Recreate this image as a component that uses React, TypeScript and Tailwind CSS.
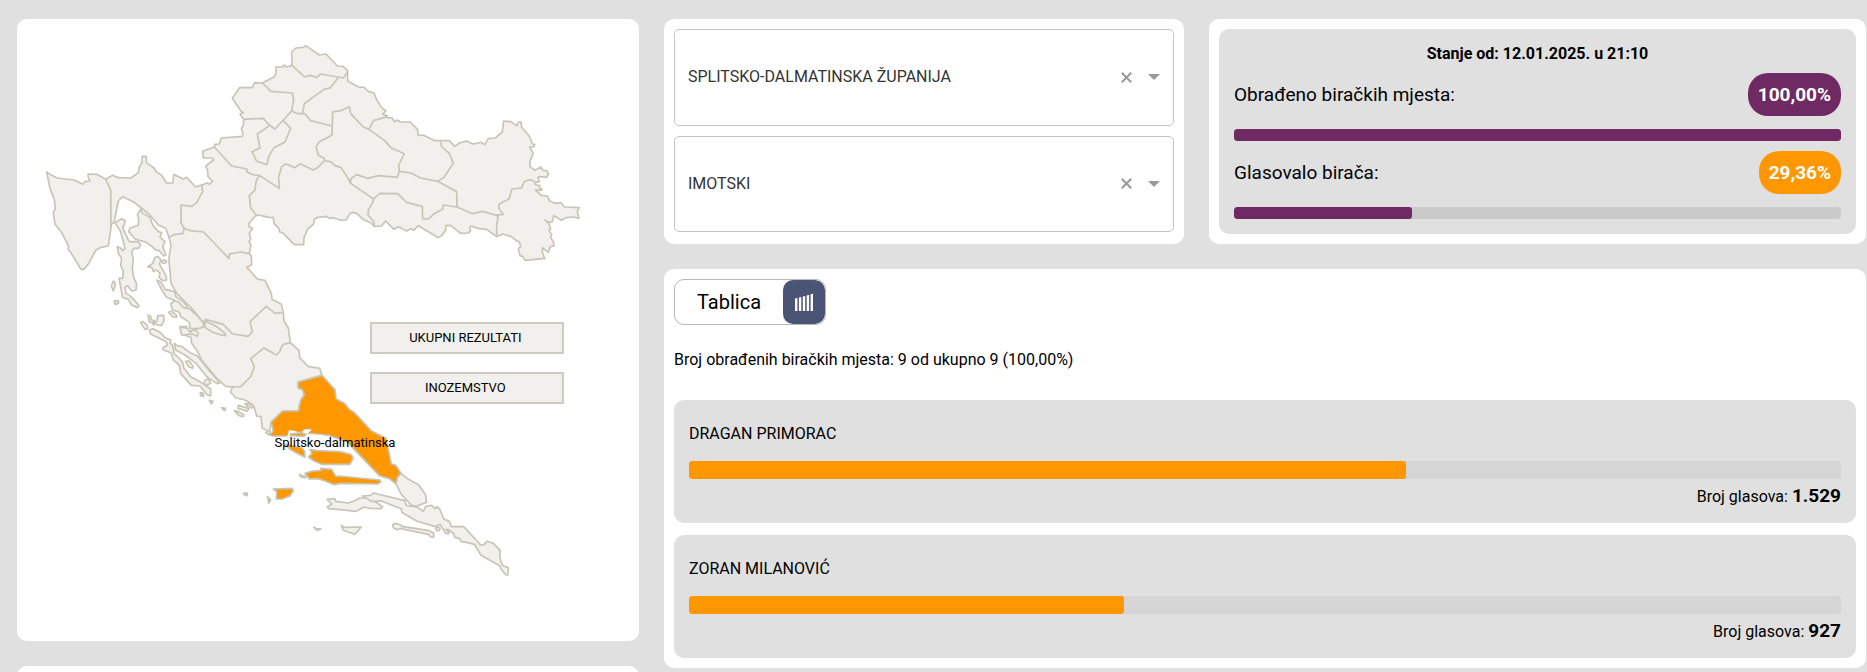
import { useState } from "react";
import type { ReactNode } from "react";
import clsx from "clsx";

interface Candidate {
  name: string;
  votes: string;
  share: number;
}

const candidates: Candidate[] = [
  { name: "DRAGAN PRIMORAC", votes: "1.529", share: 62.25 },
  { name: "ZORAN MILANOVIĆ", votes: "927", share: 37.75 },
];

/* ---------- Map geometry ---------- */

const MAINLAND =
  "140,516 152,524 172,534 222,540 249,553 254,545 270,543 265,532 264,522 290,523 317,538 338,526 355,533 392,534 410,522 416,515 417,503 426,488 427,469 439,469 439,488 462,504 468,515 484,525 500,549 519,549 521,523 550,537 560,532 587,561 605,555 622,549 628,553 638,543 624,530 623,511 617,498 641,480 637,474 610,474 608,454 643,441 644,433 658,432 664,414 727,409 729,401 724,385 730,377 731,358 720,343 730,338 723,334 697,295 719,263 757,263 764,248 787,249 823,230 828,220 828,201 848,201 852,195 862,201 876,196 875,156 888,144 910,142 917,137 958,165 978,162 1012,198 1029,199 1043,211 1043,243 1077,262 1091,261 1106,275 1122,279 1129,297 1145,323 1158,333 1148,342 1162,348 1163,353 1177,354 1183,366 1191,360 1201,366 1231,366 1253,389 1254,405 1271,406 1305,422 1348,422 1364,439 1378,429 1400,423 1418,432 1444,427 1454,434 1465,416 1486,414 1507,396 1511,363 1532,365 1551,377 1556,366 1563,366 1565,382 1589,410 1597,432 1604,433 1603,440 1589,441 1600,460 1590,483 1590,500 1605,511 1616,505 1623,501 1629,511 1640,512 1646,521 1640,532 1620,530 1614,532 1618,545 1604,548 1608,555 1619,556 1618,563 1625,567 1625,571 1606,570 1614,577 1623,586 1642,588 1649,603 1665,610 1683,608 1694,621 1738,623 1732,635 1737,655 1720,651 1698,653 1685,661 1661,647 1657,665 1645,667 1635,660 1647,671 1652,688 1647,691 1655,704 1652,712 1660,725 1662,738 1651,740 1645,757 1628,743 1627,755 1632,771 1635,775 1575,781 1568,769 1560,767 1555,745 1562,740 1559,727 1548,721 1534,710 1509,702 1490,710 1460,688 1438,686 1412,678 1409,683 1412,693 1405,699 1382,700 1352,676 1337,677 1337,691 1326,706 1315,713 1255,677 1241,691 1233,686 1220,693 1196,680 1182,688 1157,663 1144,678 1122,679 1113,668 1090,659 1070,640 1058,637 1050,641 1038,660 1023,661 1000,653 988,655 978,649 950,653 943,659 941,672 922,688 918,700 912,712 911,734 883,734 850,700 839,696 837,686 822,670 820,653 807,652 776,645 765,649 748,669 746,680 758,684 748,700 752,718 747,725 753,735 748,761 754,768 755,794 741,802 772,837 795,841 814,880 816,898 844,913 850,938 852,963 865,984 871,1028 897,1051 899,1073 924,1099 959,1105 966,1126 894,1146 894,1163 907,1169 913,1184 902,1201 895,1233 848,1233 813,1267 808,1305 797,1298 805,1292 787,1285 783,1250 770,1248 763,1223 755,1212 735,1200 708,1194 691,1176 698,1161 677,1159 650,1135 605,1080 590,1050 575,1030 573,1012 545,1003 540,980 560,980 565,994 580,992 595,985 612,972 580,930 530,880 513,850 507,780 507,772 513,735 507,712 497,685 475,675 450,645 400,605 368,590 355,603 342,668 333,672 333,682 325,738 303,742 288,750 265,792 252,808 243,808 214,760 204,748 206,738 183,695 165,672 160,638 166,625 163,598 150,565";

const BORDERS = [
  "317,538 332,570 333,682",
  "605,555 608,575 590,608 575,619 543,615 543,669 552,684 550,700 522,704 507,712",
  "552,684 570,692 611,696 687,776 688,762 722,756 748,761",
  "643,441 695,498 740,507 742,517 762,525 778,526 768,545 765,570 748,587 752,625 770,646",
  "778,526 838,565 836,530 845,500 858,492 885,503 900,491 939,510 950,505 973,483",
  "731,358 790,355 808,375 825,387 875,333 881,300 877,279 813,274 787,249",
  "850,362 872,385 855,426 822,443 806,470 801,494 770,484 756,455 780,444 772,402 808,377",
  "876,196 914,231 930,226 950,232 962,222 1030,234 1043,215",
  "1015,233 990,264 972,268 913,311 907,341",
  "875,333 893,341 915,341 932,362 995,378",
  "973,475 955,466 948,440 957,426 996,405 998,336 1022,332 1048,320 1052,341 1090,381 1107,388 1153,421 1173,443 1213,461 1196,495 1198,514 1192,532 1136,527 1103,535 1070,524 1052,537 1052,550 1035,520 1022,502 1005,497 992,485 973,483 973,475",
  "1107,388 1120,362 1162,350",
  "1198,514 1233,519 1262,534 1313,544 1332,532 1360,490 1348,460 1325,440 1321,424",
  "1313,544 1370,575 1371,621",
  "1052,550 1121,597 1140,580 1193,581 1220,607 1267,619 1268,656 1286,657 1300,643 1328,627 1330,615 1371,621 1418,641 1447,634 1496,648",
  "1121,597 1118,608 1105,630 1104,645 1122,665 1122,679",
  "1490,710 1490,675 1494,652 1490,645 1510,643 1496,625 1498,612 1527,597 1536,567 1565,564 1572,545 1588,539 1604,544",
  "612,972 616,958 670,973 698,1002 745,1009 757,995 750,965 799,919 825,940 847,938",
  "696,1161 722,1160 752,1130 763,1100 752,1076 792,1044 829,1065 839,1055 848,1034 871,1028",
];

// Kvarner and the northern Dalmatian islands
const NORTH_ISLANDS = [
  "152,27 158,40 180,52 188,75 205,95 215,98 210,112 225,125 218,140 228,165 222,168 207,152 197,150 180,135 165,125 150,122 135,117 116,95 120,84 145,76 146,55 142,45",
  "75,68 95,56 105,62 103,75 98,82 107,103 118,125 142,125 152,133 146,145 132,145 125,155 130,180 127,205 130,230 140,252 138,270 126,273 112,257 105,262 108,280 123,290 137,305 147,318 142,323 125,315 115,298 97,292 93,265 87,235 98,235 100,215 92,195 95,175 85,160 82,140 90,143 98,152 105,145 100,125 92,95",
  "70,243 76,250 74,262 70,273 64,258",
  "72,303 85,302 86,309 76,314",
  "205,170 213,180 208,192 227,225 230,240 218,242 207,232 210,220 200,210 190,214 185,202 173,200 188,190 195,172",
  "214,184 222,180 230,183 226,190 218,189",
  "200,240 212,245 225,268 242,272 254,275 258,290 280,305 292,320 285,327 265,315 250,300 230,292 215,270",
  "242,312 254,302 267,307 280,323 298,326 325,350 342,372 338,382 323,386 300,385 298,367 272,350 268,337 248,330",
  "236,337 245,334 260,346 260,352 248,350",
  "174,345 182,349 184,360 193,362 187,370 178,366",
  "204,347 221,346 222,362 215,377 202,375 197,370 190,375 189,368 200,364",
  "152,368 158,364 172,376 173,386 165,388",
  "178,390 190,386 210,397 226,413 243,420 240,430 247,435 253,462 268,475 278,488 282,505 302,530 330,545 362,567 362,588 352,585 330,558 304,556 272,520 268,495 250,480 243,458 220,450 218,444 232,436 229,425 182,402",
  "253,430 262,437 276,440 300,458 322,468 352,505 390,548 382,551 353,533 318,490 285,465 257,450",
  "287,484 297,483 309,498 308,505 296,500",
  "345,541 355,536 362,550 350,556 342,550",
  "331,578 340,580 341,589 332,587",
  "358,601 369,603 364,612",
  "395,623 406,625 406,631 399,629",
  "270,380 292,385 300,397 313,389 326,400 322,409 307,402 275,405",
  "343,362 365,372 383,382 405,400 407,407 390,404 365,395 345,382",
];

const SIBENIK_ISLANDS = [
  "523,452 535,455 552,464 550,470 537,467",
  "535,436 552,441 567,446 560,454 545,448 534,446",
  "555,431 568,432 583,440 575,444 563,439",
];

const SPLIT_ISLANDS = [
  "175,95 185,94 180,105 190,98 215,98 222,90 243,88 230,98 222,108 180,108",
  "165,132 190,138 215,142 224,155 225,172 205,162 180,148",
  "240,149 262,152 330,155 362,163 370,173 360,193 275,193 252,183 235,171 246,160",
  "225,220 248,213 272,212 272,205 305,208 318,230 325,228 450,240 453,245 444,252 330,250 313,254 285,243 265,236 238,237",
  "130,267 187,265 190,273 180,288 157,297 139,297 140,275",
  "113,290 122,300 116,310",
];

const SMALL_ISLANDS = [
  "208,222 216,228 228,228 227,233 212,231",
  "40,280 52,279 52,287 43,284",
  "251,382 263,387 273,386 262,391",
  "334,376 343,382 394,381 374,403 340,391",
];

const DUBROVNIK = [
  "21,88 44,86 48,94 84,99 104,92 119,84 151,84 188,111 183,116 151,115 132,111 108,124 60,119 26,116 22,111 36,102",
  "127,78 152,76 160,69 255,92 258,106 291,111 310,124 317,109 335,106 346,116 350,110 359,117 372,148 388,154 394,170 431,170 477,219 481,225 492,224 501,214 520,220 541,242 539,257 543,275 549,287 565,293 564,315 558,315 545,300 539,287 483,256 477,245 470,235 465,224 440,217 425,215 418,205 404,202 402,192 390,182 377,178 388,187 384,192 375,188 366,172 360,163 346,170 290,153 245,127 245,117 184,93 155,94",
  "218,165 225,160 244,165 246,169 327,182 341,189 341,202 331,201 328,194 240,175 234,179 221,175",
  "350,171 360,174 359,180 352,183 347,178",
];

interface ShapesProps {
  shapes: string[];
  x?: number;
  y?: number;
}

function Shapes({ shapes, x = 0, y = 0 }: ShapesProps) {
  return (
    <g transform={`translate(${x} ${y})`}>
      {shapes.map((points) => (
        <polygon key={points} points={points} />
      ))}
    </g>
  );
}

function CroatiaMap() {
  return (
    <svg
      viewBox="17 19 622 622"
      role="img"
      aria-label="Karta županija"
      className="block w-full"
    >
      <g
        transform="scale(0.33333)"
        className="fill-[#f2f0ec] stroke-[#c8c4b6]"
        strokeWidth="5"
        strokeLinejoin="round"
      >
        <polygon points={MAINLAND} />
        {BORDERS.map((points) => (
          <polyline key={points} points={points} className="fill-none" />
        ))}
        <Shapes shapes={NORTH_ISLANDS} x={270} y={600} />
        <Shapes shapes={SIBENIK_ISLANDS} x={180} y={780} />
        <Shapes shapes={SMALL_ISLANDS} x={690} y={1200} />

        {/* Dubrovačko-neretvanska */}
        <polygon points="1203,1420 1225,1438 1256,1454 1277,1485 1280,1507 1250,1519 1235,1516 1203,1482 1188,1452 1190,1430" />
        <Shapes shapes={DUBROVNIK} x={960} y={1410} />

        {/* Splitsko-dalmatinska, selected */}
        <g className="fill-[#ff9800]">
          <polygon points="966,1126 1005,1169 1008,1196 1035,1211 1045,1225 1063,1238 1115,1293 1158,1315 1174,1392 1188,1396 1203,1420 1192,1432 1188,1452 1170,1437 1138,1427 1060,1345 1040,1325 985,1306 955,1303 925,1300 880,1303 860,1308 820,1308 808,1305 820,1292 813,1267 848,1233 895,1233 902,1201 913,1184 907,1169 894,1163 894,1146" />
          <Shapes shapes={SPLIT_ISLANDS} x={690} y={1200} />
        </g>
        <polygon
          points="862,1310 868,1291 882,1292 905,1300 915,1288 935,1290 920,1303 960,1304 1000,1313 980,1318 870,1320"
          className="fill-white stroke-none"
        />
        <polygon points="870,1302 905,1298 918,1303 912,1309 872,1307" className="fill-[#ff9800]" />
      </g>
      <text
        x="335"
        y="447"
        textAnchor="middle"
        className="fill-black text-[13px]"
      >
        Splitsko-dalmatinska
      </text>
    </svg>
  );
}

/* ---------- Building blocks ---------- */

function Card({ className, children }: { className?: string; children?: ReactNode }) {
  return <section className={clsx("rounded-[10px] bg-white", className)}>{children}</section>;
}

function MapButton({ children }: { children: ReactNode }) {
  return (
    <button
      type="button"
      className="h-8 w-full border-2 border-[#cdcabf] bg-[#f2f0ec] pr-1 text-[13px] leading-4"
    >
      {children}
    </button>
  );
}

function RegionSelect({ label, value }: { label: string; value: string }) {
  const [selected, setSelected] = useState(value);

  return (
    <div className="relative flex flex-1">
      <select
        aria-label={label}
        value={selected}
        onChange={(e) => setSelected(e.target.value)}
        className="w-full appearance-none rounded-[5px] border border-[#c4c4c4] bg-white px-[13px] text-base text-[#333333]"
      >
        <option value="" />
        <option value={value}>{value}</option>
      </select>
      <button
        type="button"
        aria-label="Očisti"
        onClick={() => setSelected("")}
        className="absolute inset-y-0 right-[42px] flex items-center"
      >
        <svg viewBox="0 0 11 11" className="size-[11px] stroke-[#999999]" strokeWidth="2">
          <path d="M.8.8 10.2 10.2M10.2.8.8 10.2" />
        </svg>
      </button>
      <svg
        viewBox="0 0 12 6"
        aria-hidden="true"
        className="pointer-events-none absolute top-1/2 right-[14px] h-[6px] w-3 -translate-y-1/2 fill-[#999999]"
      >
        <path d="M0 0h12L6 6z" />
      </svg>
    </div>
  );
}

interface TurnoutProps {
  label: string;
  value: string;
  percent: number;
  badgeClass: string;
}

function Turnout({ label, value, percent, badgeClass }: TurnoutProps) {
  return (
    <div className="mt-[10px]">
      <div className="flex items-center justify-between">
        <span className="pt-[2px] text-[19px]">{label}</span>
        <span
          className={clsx(
            "rounded-[20px] px-[10px] text-[19px] leading-[43px] font-bold text-white",
            badgeClass,
          )}
        >
          {value}
        </span>
      </div>
      <div className="mt-[13px] h-3 overflow-hidden rounded-[3px] bg-[#cacaca]">
        <div className="h-full rounded-[3px] bg-[#6f2963]" style={{ width: `${percent}%` }} />
      </div>
    </div>
  );
}

function CandidateRow({ name, votes, share }: Candidate) {
  return (
    <li className="rounded-[10px] bg-[#e0e0e0] p-[15px]">
      <h3 className="text-base leading-[38px]">{name}</h3>
      <div className="mt-2 h-[18px] overflow-hidden rounded-[3px] bg-[#d5d5d5]">
        <div className="h-full rounded-[3px] bg-[#ff9800]" style={{ width: `${share}%` }} />
      </div>
      <p className="mt-[6px] flex items-baseline justify-end gap-1 text-base leading-[23px]">
        Broj glasova: <strong className="text-[19px] leading-5 font-bold">{votes}</strong>
      </p>
    </li>
  );
}

export default function App() {
  return (
    <main className="h-screen overflow-hidden bg-[#e0e0e0] pt-[19px] pr-px pl-[17px] font-[Roboto,sans-serif] text-black">
      <div className="grid grid-cols-[622fr_1202fr] items-start gap-[25px]">
        <div className="flex flex-col gap-[25px]">
          <Card className="relative">
            <CroatiaMap />
            <div className="absolute top-[48.7%] left-[56.8%] flex w-[31.2%] flex-col gap-[18px]">
              <MapButton>UKUPNI REZULTATI</MapButton>
              <MapButton>INOZEMSTVO</MapButton>
            </div>
          </Card>
          <Card className="h-40" />
        </div>

        <div className="flex flex-col gap-[25px]">
          <div className="grid grid-cols-[520fr_657fr] gap-[25px]">
            <Card className="flex flex-col gap-[10px] p-[10px] pb-3">
              <RegionSelect label="Županija" value="SPLITSKO-DALMATINSKA ŽUPANIJA" />
              <RegionSelect label="Grad ili općina" value="IMOTSKI" />
            </Card>

            <Card className="p-[10px]">
              <div className="rounded-[10px] bg-[#e0e0e0] p-[15px]">
                <h2 className="text-center text-base leading-[19px] font-bold">
                  Stanje od: 12.01.2025. u 21:10
                </h2>
                <Turnout
                  label="Obrađeno biračkih mjesta:"
                  value="100,00%"
                  percent={100}
                  badgeClass="bg-[#6f2963]"
                />
                <Turnout
                  label="Glasovalo birača:"
                  value="29,36%"
                  percent={29.36}
                  badgeClass="bg-[#ff9800]"
                />
              </div>
            </Card>
          </div>

          <Card className="p-[10px]">
            <div className="flex h-[46px] w-fit overflow-hidden rounded-[10px] border border-[#b8b8b8]">
              <button type="button" className="px-[22px] text-[20px]">
                Tablica
              </button>
              <button
                type="button"
                aria-label="Grafikon"
                className="flex w-[42px] items-center justify-center rounded-[10px] bg-[#4a5475]"
              >
                <svg viewBox="0 0 18 18" className="size-[18px] fill-white">
                  <path d="M0 5.6 2.4 5V18H0zM3.9 4.6 6.3 4V18H3.9zM7.8 3.5 10.2 2.9V18H7.8zM11.7 2.4 14.1 1.8V18H11.7zM15.6 1.3 18 .7V18H15.6z" />
                </svg>
              </button>
            </div>

            <p className="mt-[25px] text-base leading-[19px]">
              Broj obrađenih biračkih mjesta: 9 od ukupno 9 (100,00%)
            </p>

            <ul className="mt-[31px] flex flex-col gap-3">
              {candidates.map((candidate) => (
                <CandidateRow key={candidate.name} {...candidate} />
              ))}
            </ul>
          </Card>
        </div>
      </div>
    </main>
  );
}
